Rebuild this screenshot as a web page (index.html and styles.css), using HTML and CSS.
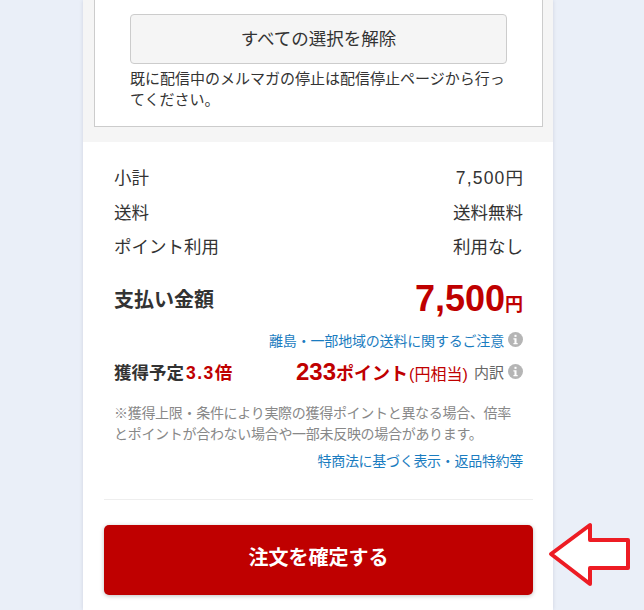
FILE: index.html
```html
<!DOCTYPE html>
<html lang="ja">
<head>
    <meta charset="UTF-8">
    <meta name="viewport" content="width=device-width, initial-scale=1.0">
    <title>注文の確認</title>
    <link rel="stylesheet" href="styles.css">
</head>
<body>
    <div class="column">
        <div class="mail-area">
            <div class="mail-box">
                <a href="#clear" class="clear-btn">すべての選択を解除</a>
                <p class="mail-note">既に配信中のメルマガの停止は配信停止ページから行ってください。</p>
            </div>
        </div>

        <div class="summary">
            <div class="row"><span>小計</span><span><span class="num">7,500</span>円</span></div>
            <div class="row"><span>送料</span><span>送料無料</span></div>
            <div class="row"><span>ポイント利用</span><span>利用なし</span></div>

            <div class="total">
                <span class="total-label">支払い金額</span>
                <span class="total-price">7,500<small>円</small></span>
            </div>

            <div class="notice">
                <a href="#ship" class="link">離島・一部地域の送料に関するご注意</a>
                <svg class="info" viewBox="0 0 16 16"><circle cx="8" cy="8" r="8"/><rect x="6.900" y="3" width="2.200" height="2.200" fill="#fff"/><path d="M5.800 6.600h3.300v5.200h1.200v1.300H5.800v-1.300h1.100V7.900H5.800z" fill="#fff"/></svg>
            </div>

            <div class="points">
                <span class="points-label">獲得予定<em>3.3倍</em></span>
                <span class="points-val"><b>233</b><strong>ポイント</strong><i>(円相当)</i></span>
                <span class="points-info">内訳
                    <svg class="info" viewBox="0 0 16 16"><circle cx="8" cy="8" r="8"/><rect x="6.900" y="3" width="2.200" height="2.200" fill="#fff"/><path d="M5.800 6.600h3.300v5.200h1.200v1.300H5.800v-1.300h1.100V7.900H5.800z" fill="#fff"/></svg>
                </span>
            </div>

            <p class="points-note">※獲得上限・条件により実際の獲得ポイントと異なる場合、倍率とポイントが合わない場合や一部未反映の場合があります。</p>
            <div class="legal"><a href="#legal" class="link">特商法に基づく表示・返品特約等</a></div>
        </div>

        <div class="order-area">
            <a href="#order" class="order-btn">注文を確定する</a>
        </div>
    </div>

    <svg class="arrow" viewBox="0 0 84 66"><path d="M3 32 L42 3 V18 H80 V46 H42 V62 Z" fill="#fff" stroke="#ed1c24" stroke-width="4" stroke-linejoin="round"/></svg>
</body>
</html>
```

FILE: styles.css
```css
*{
    box-sizing: border-box;
}
html,body{
    height: 100%;
}
body{
    margin: 0;
    background-color: #eaeff8;
    font-family: "Liberation Sans", "Noto Sans CJK JP", sans-serif;
    color: #333;
    overflow: hidden;
    position: relative;
}
a{
    text-decoration: none;
}
.column{
    width: 470px;
    height: 610px;
    margin-left: 83px;
    background-color: #fff;
    box-shadow: 0 0 4px rgba(0, 0, 60, 0.12);
}

.mail-area{
    background-color: #f5f5f5;
    padding: 0 10px 15px 11px;
}
.mail-box{
    height: 127px;
    background-color: #fff;
    border: 1px solid #ccc;
    border-top: none;
    padding: 14px 35px 0 35px;
}
.clear-btn{
    display: block;
    height: 50px;
    line-height: 48px;
    text-align: center;
    font-size: 17.500px;
    color: #333;
    background-color: #f5f5f5;
    border: 1px solid #ccc;
    border-radius: 4px;
}
.mail-note{
    margin: 4px 0 0;
    font-size: 15px;
    line-height: 21px;
}

.summary{
    padding: 24px 30px 0 31px;
}
.row{
    display: flex;
    justify-content: space-between;
    font-size: 17.500px;
    line-height: 24px;
    height: 34.500px;
}
.num{
    letter-spacing: 1.200px;
}
.total{
    display: flex;
    justify-content: space-between;
    align-items: center;
    height: 44px;
    margin-top: 7px;
}
.total-label{
    font-size: 20px;
    font-weight: bold;
}
.total-price{
    font-size: 36px;
    font-weight: bold;
    color: #bf0000;
}
.total-price small{
    font-size: 18px;
}
.notice{
    display: flex;
    justify-content: flex-end;
    align-items: center;
    gap: 4px;
    margin-top: 9px;
    height: 20px;
}
.link{
    font-size: 14px;
    letter-spacing: -0.3px;
    color: #1a7cc0;
}
.notice .link{
    letter-spacing: -0.180px;
}
.info{
    width: 15px;
    height: 15px;
    fill: #b5b5b5;
}
.points{
    display: flex;
    align-items: center;
    height: 30px;
    margin-top: 7px;
}
.points-label{
    font-size: 17.500px;
    font-weight: bold;
    width: 182px;
}
.points-label em{
    font-style: normal;
    letter-spacing: 1.500px;
    color: #bf0000;
    margin-left: 2px;
}
.points-val{
    color: #bf0000;
    white-space: nowrap;
}
.points-val b{
    font-size: 24px;
}
.points-val strong{
    font-size: 18px;
}
.points-val i{
    font-style: normal;
    font-size: 16px;
    margin-left: 1px;
}
.points-info{
    display: flex;
    align-items: center;
    gap: 4px;
    margin-left: auto;
    font-size: 15px;
    color: #666;
}
.points-note{
    margin: 16px 0 0;
    font-size: 14px;
    letter-spacing: -0.3px;
    line-height: 21px;
    color: #888;
}
.legal{
    text-align: right;
    margin-top: 5px;
}

.order-area{
    margin: 29px 20px 0 21px;
    padding-top: 25px;
    border-top: 1px solid #eee;
}
.order-btn{
    display: block;
    height: 70px;
    line-height: 66px;
    text-align: center;
    font-size: 20px;
    font-weight: bold;
    color: #fff;
    background-color: #bf0000;
    border-radius: 5px;
    box-shadow: 0 1px 4px rgba(0, 0, 0, 0.25);
}

/* annotation drawn over the screenshot */
.arrow{
    position: absolute;
    left: 548px;
    top: 522px;
    width: 84px;
    height: 66px;
}
```
